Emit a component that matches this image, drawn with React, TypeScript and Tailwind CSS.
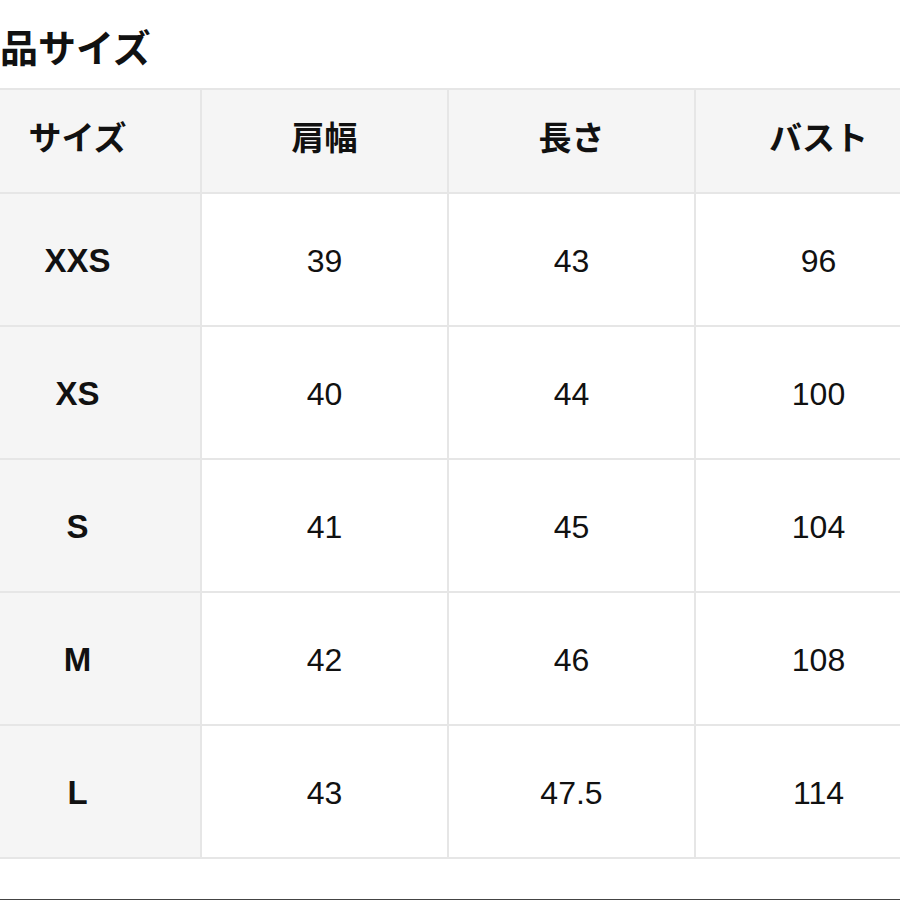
import React from "react";

const headers = ["サイズ", "肩幅", "長さ", "バスト"];
const rows: [string, string, string, string][] = [
  ["XXS", "39", "43", "96"],
  ["XS", "40", "44", "100"],
  ["S", "41", "45", "104"],
  ["M", "42", "46", "108"],
  ["L", "43", "47.5", "114"],
];

export default function App() {
  return (
    <div className="w-[900px] h-[900px] overflow-hidden bg-white relative">
      <div className="h-[88px] flex items-start pt-[22px]">
        <h2
          className="ml-0 text-[38px] leading-[48px] font-bold text-[#111]"
          style={{ fontFamily: '"Noto Sans CJK JP", "Noto Sans", sans-serif' }}
        >
          品サイズ
        </h2>
      </div>
      <div className="ml-[-47px] w-[992px] border-t-2 border-l-2 border-[#e6e6e6]">
        <div className="flex h-[104px]">
          {headers.map((h) => (
            <div
              key={h}
              className="w-[247px] shrink-0 flex items-center justify-center bg-[#f5f5f5] border-r-2 border-b-2 border-[#e6e6e6] text-[33px] font-bold text-[#111] pb-[8px]"
              style={{ fontFamily: '"Noto Sans CJK JP", "Noto Sans", sans-serif' }}
            >
              {h}
            </div>
          ))}
        </div>
        {rows.map((r) => (
          <div key={r[0]} className="flex h-[133px]">
            {r.map((c, i) => (
              <div
                key={i}
                className={
                  i === 0
                    ? "w-[247px] shrink-0 flex items-center justify-center bg-[#f5f5f5] border-r-2 border-b-2 border-[#e6e6e6] text-[33px] font-bold text-[#111] pt-[2px]"
                    : "w-[247px] shrink-0 flex items-center justify-center bg-white border-r-2 border-b-2 border-[#e6e6e6] text-[32px] text-[#111] pt-[2px]"
                }
                style={{ fontFamily: '"Liberation Sans", Arial, sans-serif' }}
              >
                {c}
              </div>
            ))}
          </div>
        ))}
      </div>
      <div className="mt-[40px] border-t-2 border-[#444]"></div>
    </div>
  );
}
